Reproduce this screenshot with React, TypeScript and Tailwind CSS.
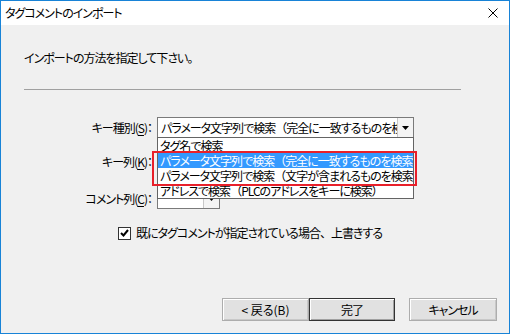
import React from "react";

const font = {
  fontFamily: '"Noto Sans CJK JP", "Noto Sans", sans-serif',
};

function ComboArrow() {
  return (
    <div className="flex h-full w-[16px] items-center justify-center border-l border-[#c8c8c8] bg-[#f4f4f4]">
      <svg width="7" height="4" viewBox="0 0 7 4">
        <path d="M0 0h7L3.5 4z" fill="#000" />
      </svg>
    </div>
  );
}

function Label({ text, hotkey }: { text: string; hotkey: string }) {
  return (
    <div className="w-[151px] shrink-0 text-right">
      {text}(<span className="underline underline-offset-2">{hotkey}</span>)：
    </div>
  );
}

// full-width brackets keep their width in the list
function Wide({ children }: { children: string }) {
  return <span className="[font-feature-settings:normal]">{children}</span>;
}

const listItems = [
  ["タグ名で検索", "", ""],
  ["パラメータ文字列で検索", "（", "完全に一致するものを検索）"],
  ["パラメータ文字列で検索", "（", "文字が含まれるものを検索）"],
  ["アドレスで検索", "（", "PLCのアドレスをキーに検索）"],
];

export default function App() {
  return (
    <div
      className="flex h-[334px] w-[510px] flex-col border border-[#1883d7] bg-[#f0f0f0] text-[12px] leading-[16px] tracking-[-1px] text-black [font-feature-settings:'palt']"
      style={font}
    >
      <div className="flex h-[24px] shrink-0 items-center justify-between bg-white pl-[4px] pr-[11px]">
        <span>タグコメントのインポート</span>
        <svg width="10" height="10" viewBox="0 0 10 10">
          <path d="M0.5 0.5l9 9M9.5 0.5l-9 9" stroke="#000" strokeWidth="1" />
        </svg>
      </div>

      <div className="flex flex-1 flex-col">
        <p className="ml-[23px] mt-[25px]">インポートの方法を指定して下さい。</p>
        <div className="ml-[23px] mt-[23px] h-px w-[437px] bg-[#a0a0a0]" />

        <div className="mt-[27px] flex h-[21px] items-center gap-[5px]">
          <Label text="キー種別" hotkey="S" />
          <div className="relative flex h-[21px] w-[257px] items-stretch border border-[#7a7a7a] bg-white">
            <div className="flex-1 overflow-hidden whitespace-nowrap pl-[3px] leading-[19px]">
              パラメータ文字列で検索<Wide>（</Wide>完全に一致するものを検索）
            </div>
            <ComboArrow />
            <div className="absolute -left-px top-full z-10 w-[257px] border border-[#646464] bg-white">
              {listItems.map(([a, b, c], i) => (
                <div
                  key={a + c}
                  className={
                    i === 1
                      ? "h-[15px] overflow-hidden whitespace-nowrap bg-[#3399ff] pl-[2px] leading-[15px] text-white"
                      : "h-[15px] overflow-hidden whitespace-nowrap pl-[2px] leading-[15px]"
                  }
                >
                  {a}
                  {b ? <Wide>{b}</Wide> : null}
                  {c}
                </div>
              ))}
              <div className="absolute -left-[6px] top-[13px] h-[35px] w-[265px] border-2 border-[#e8202a]" />
            </div>
          </div>
        </div>

        <div className="mt-[13px] flex h-[21px] items-center gap-[5px]">
          <Label text="キー列" hotkey="K" />
          <div className="flex h-[21px] w-[257px] border border-[#7a7a7a] bg-white" />
        </div>

        <div className="mt-[16px] flex h-[21px] items-center gap-[5px]">
          <Label text="コメント列" hotkey="C" />
          <div className="flex h-[21px] w-[63px] items-stretch justify-end border border-[#7a7a7a] bg-white">
            <ComboArrow />
          </div>
        </div>

        <div className="ml-[117px] mt-[16px] flex items-center gap-[5px]">
          <div className="flex h-[13px] w-[13px] items-center justify-center border border-[#333] bg-white">
            <svg width="9" height="8" viewBox="0 0 9 8">
              <path d="M1 4l2.5 2.5L8 1" stroke="#000" strokeWidth="2" fill="none" />
            </svg>
          </div>
          <span>
            既にタグコメントが指定されている場合<Wide>、</Wide>上書きする
          </span>
        </div>

        <div className="mb-[12px] mr-[12px] mt-auto flex justify-end">
          <button className="h-[23px] w-[87px] border border-[#adadad] bg-[#e1e1e1] tracking-normal shadow-[inset_1px_1px_#fff,inset_-1px_-1px_#c8c8c8]">
            &lt; 戻る(B)
          </button>
          <button className="h-[23px] w-[86px] border border-[#333] bg-[#e1e1e1] shadow-[inset_1px_1px_#fff,inset_-1px_-1px_#a0a0a0]">
            完了
          </button>
          <button className="ml-[14px] h-[23px] w-[88px] border border-[#adadad] bg-[#e1e1e1] shadow-[inset_1px_1px_#fff,inset_-1px_-1px_#c8c8c8]">
            キャンセル
          </button>
        </div>
      </div>
    </div>
  );
}
